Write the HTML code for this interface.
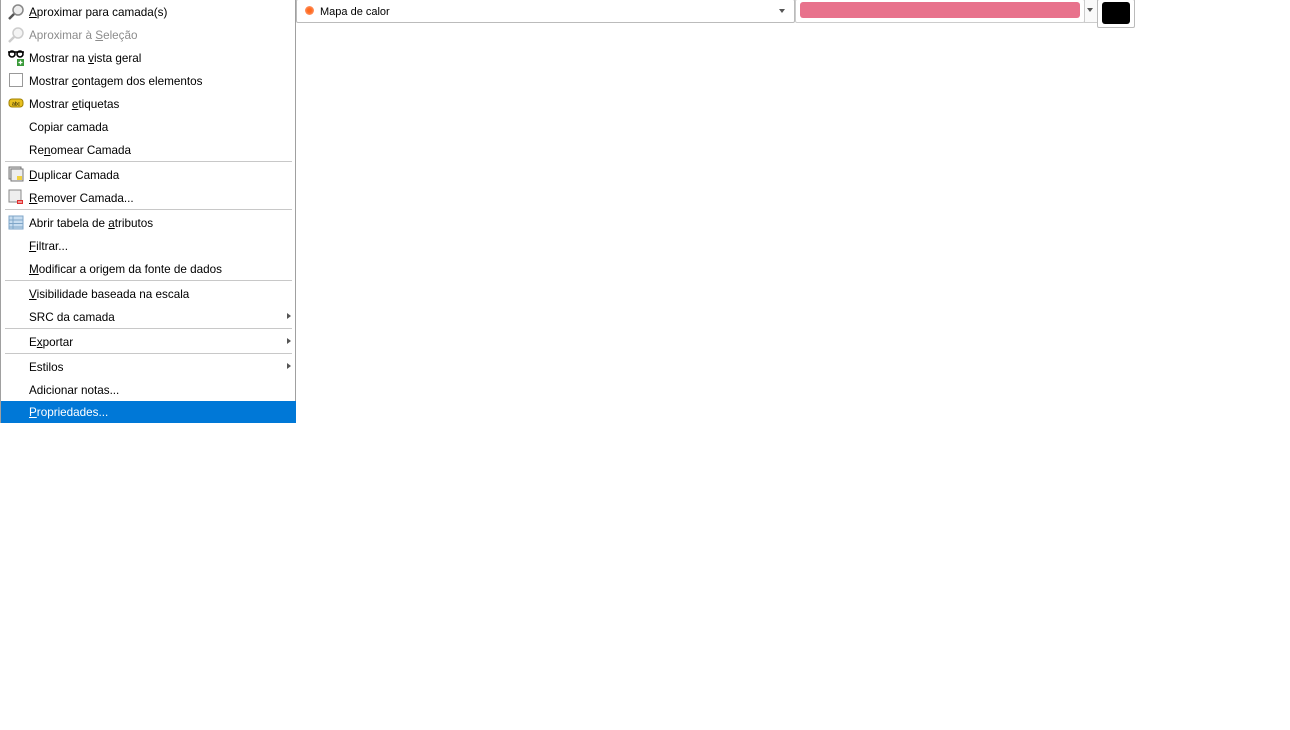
<!DOCTYPE html>
<html><head><meta charset="utf-8"><style>
body{margin:0;width:1290px;height:730px;background:#fff;position:relative;overflow:hidden;font-family:"Liberation Sans",sans-serif;font-size:11.7px;color:#000}
.menu{position:absolute;left:0;top:0;width:294px;height:422px;border:1px solid #a0a0a0;border-top:none;background:#fff}
.it{position:absolute;left:28px;height:23px;line-height:25px;white-space:nowrap}
.dis{color:#8c8c8c}
.sep{position:absolute;left:4px;width:287px;height:1px;background:#c8c8c8}
.arr{position:absolute;left:286px;width:0;height:0;border-left:4px solid #555;border-top:3.5px solid transparent;border-bottom:3.5px solid transparent}
.hl{position:absolute;left:0;top:401px;width:295px;height:22px;background:#0078d7}
.ic{position:absolute;left:8px}
</style></head><body>
<div class="menu">
<div class="hl"></div>
<svg class="ic" style="left:7px;top:4px" width="16" height="16"><circle cx="10" cy="6" r="5" fill="#eee" stroke="#888" stroke-width="1.5"/><line x1="6" y1="10" x2="1" y2="15" stroke="#555" stroke-width="2.5"/></svg>
<svg class="ic" style="left:7px;top:27px" width="16" height="16"><circle cx="10" cy="6" r="5" fill="#f4f4f4" stroke="#ccc" stroke-width="1.5"/><line x1="6" y1="10" x2="1" y2="15" stroke="#ccc" stroke-width="2.5"/></svg>
<svg class="ic" style="left:7px;top:50px" width="17" height="17"><circle cx="4" cy="4" r="3" fill="none" stroke="#000" stroke-width="1.6"/><circle cx="12" cy="4" r="3" fill="none" stroke="#000" stroke-width="1.6"/><line x1="0" y1="2" x2="16" y2="2" stroke="#000" stroke-width="1.5"/><rect x="9" y="9" width="7" height="7" fill="#3a9a3a"/><path d="M12.5 10.5v4M10.5 12.5h4" stroke="#fff" stroke-width="1.3"/></svg>
<div class="ic" style="left:8px;top:73px;width:12px;height:12px;border:1px solid #999;background:#fff"></div>
<svg class="ic" style="left:7px;top:98px" width="16" height="10"><rect x="1" y="1" width="14" height="8" rx="3" fill="#e8c020" stroke="#a08000"/><text x="8" y="7.5" font-size="5" text-anchor="middle" font-family="Liberation Sans">abc</text></svg>
<svg class="ic" style="left:7px;top:166px" width="16" height="16"><rect x="1" y="1" width="12" height="12" fill="#ddd" stroke="#777"/><rect x="3" y="3" width="12" height="12" fill="#eee" stroke="#777"/><rect x="9" y="10" width="5" height="4" fill="#f0d040"/></svg>
<svg class="ic" style="left:7px;top:189px" width="16" height="16"><rect x="1" y="1" width="12" height="12" fill="#eee" stroke="#888"/><rect x="9" y="11" width="6" height="4" fill="#e03030"/><line x1="10" y1="13" x2="14" y2="13" stroke="#fff"/></svg>
<svg class="ic" style="left:7px;top:215px" width="16" height="15"><rect x="1" y="1" width="14" height="13" fill="#c8ddf0" stroke="#7fa6c8"/><path d="M1 5h14M1 8.5h14M1 12h14M5 1v13" stroke="#7fa6c8"/></svg>

<div class="it" style="top:0"><u>A</u>proximar para camada(s)</div>
<div class="it dis" style="top:23px">Aproximar à <u>S</u>eleção</div>
<div class="it" style="top:46px">Mostrar na <u>v</u>ista geral</div>
<div class="it" style="top:69px">Mostrar <u>c</u>ontagem dos elementos</div>
<div class="it" style="top:92px">Mostrar <u>e</u>tiquetas</div>
<div class="it" style="top:115px">Copiar camada</div>
<div class="it" style="top:138px">Re<u>n</u>omear Camada</div>
<div class="sep" style="top:161px"></div>
<div class="it" style="top:163px"><u>D</u>uplicar Camada</div>
<div class="it" style="top:186px"><u>R</u>emover Camada...</div>
<div class="sep" style="top:209px"></div>
<div class="it" style="top:211px">Abrir tabela de <u>a</u>tributos</div>
<div class="it" style="top:234px"><u>F</u>iltrar...</div>
<div class="it" style="top:257px"><u>M</u>odificar a origem da fonte de dados</div>
<div class="sep" style="top:280px"></div>
<div class="it" style="top:282px"><u>V</u>isibilidade baseada na escala</div>
<div class="it" style="top:305px">SRC da camada</div><div class="arr" style="top:313px"></div>
<div class="sep" style="top:328px"></div>
<div class="it" style="top:330px">E<u>x</u>portar</div><div class="arr" style="top:338px"></div>
<div class="sep" style="top:353px"></div>
<div class="it" style="top:355px">Estilos</div><div class="arr" style="top:363px"></div>
<div class="it" style="top:378px">Adicionar notas...</div>
<div class="it" style="top:400px;color:#fff"><u>P</u>ropriedades...</div>
</div>

<div style="position:absolute;left:296px;top:-1px;width:497px;height:22px;border:1px solid #bbb;border-radius:2px;background:#fff"></div>
<div style="position:absolute;left:305px;top:6px;width:9px;height:9px;border-radius:50%;background:radial-gradient(circle,#ff6a20 30%,#ffb090 100%)"></div>
<div style="position:absolute;left:320px;top:1px;line-height:23px;font-size:11px">Mapa de calor</div>
<div style="position:absolute;left:779px;top:9px;border-top:4px solid #555;border-left:3.5px solid transparent;border-right:3.5px solid transparent"></div>

<div style="position:absolute;left:795px;top:-1px;width:288px;height:22px;border:1px solid #ccc;border-radius:2px;background:#fff"></div>
<div style="position:absolute;left:800px;top:2px;width:280px;height:16px;border-radius:3px;background:#e8728c"></div>
<div style="position:absolute;left:1084px;top:-1px;width:12px;height:22px;border:1px solid #ccc;background:#fafafa"></div>
<div style="position:absolute;left:1087px;top:8px;border-top:4px solid #555;border-left:3px solid transparent;border-right:3px solid transparent"></div>

<div style="position:absolute;left:1097px;top:-1px;width:36px;height:27px;border:1px solid #bbb;border-radius:2px;background:#fff"></div>
<div style="position:absolute;left:1102px;top:2px;width:28px;height:22px;border-radius:3px;background:#000"></div>
</body></html>
